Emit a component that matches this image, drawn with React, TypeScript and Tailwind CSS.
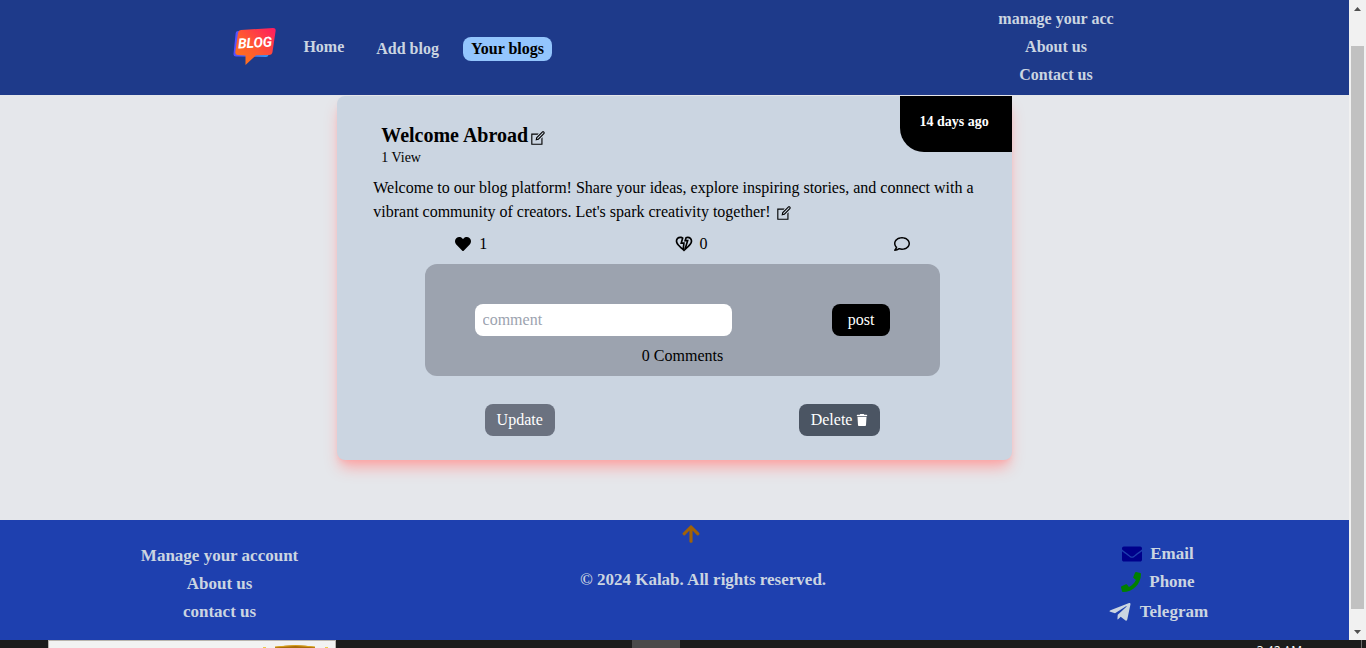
import {
  FaArrowUp,
  FaEnvelope,
  FaHeart,
  FaPhone,
  FaRegComment,
  FaTelegramPlane,
} from "react-icons/fa";
import { FaTrash } from "react-icons/fa6";
import { LiaEditSolid } from "react-icons/lia";
import { MdOutlineHeartBroken } from "react-icons/md";

function Logo() {
  return (
    <svg viewBox="0 0 44 40" className="h-10 w-11 shrink-0" role="img" aria-label="Blog">
      <defs>
        <linearGradient id="bubble" x1="0" y1="1" x2="1" y2="0">
          <stop offset="0" stopColor="#ff7a14" />
          <stop offset="0.45" stopColor="#ff5a30" />
          <stop offset="1" stopColor="#ff1a62" />
        </linearGradient>
        <linearGradient id="bubbleShade" x1="0" y1="0" x2="1" y2="0">
          <stop offset="0" stopColor="#5a4cff" />
          <stop offset="1" stopColor="#2a9df4" />
        </linearGradient>
      </defs>
      <path d="M5 4 Q3 4 2.700 6 L0.500 27 Q0.300 29.500 3 29.500 L33 30 Q35 30 35.500 28 L38 7 Z" fill="url(#bubbleShade)" />
      <path d="M8 3 L40 1 Q43 1 42.600 4 L39.500 25 Q39 28 36 28 L23 28.300 L12.500 38 L12.500 28.500 L4.500 28 Q2 28 2.300 25 L5 6 Q5.500 3.200 8 3 Z" fill="url(#bubble)" />
      <text
        x="22"
        y="20.500"
        textAnchor="middle"
        fontSize="14"
        fontWeight="700"
        fontStyle="italic"
        fill="#fff"
        fontFamily="Roboto, sans-serif"
        transform="rotate(-3 22 16)"
      >
        BLOG
      </text>
    </svg>
  );
}

function Header() {
  return (
    <header className="flex h-[95px] shrink-0 items-center justify-between bg-[#1e3a8a] pr-[17.45%] pb-0.5 pl-[17.3%] font-bold text-[#cbd5e1]">
      <nav className="flex items-center gap-4">
        <div className="flex items-center gap-[18px]">
          <Logo />
          <a href="#home" className="px-2">Home</a>
        </div>
        <div className="flex items-center gap-4 pt-1">
          <a href="#add" className="px-2">Add blog</a>
          <a href="#yours" className="rounded-lg bg-[#93c5fd] px-2 text-black">Your blogs</a>
        </div>
      </nav>
      <nav className="flex flex-col items-center gap-1">
        <a href="#account">manage your acc</a>
        <a href="#about">About us</a>
        <a href="#contact">Contact us</a>
      </nav>
    </header>
  );
}

function BlogCard() {
  return (
    <article className="relative mx-auto mt-px w-1/2 rounded-lg bg-[#cbd5e1] pt-[27px] pr-5 pb-6 pl-9 text-black shadow-[0_10px_15px_-3px_#fca5a5,0_4px_6px_-4px_#fca5a5]">
      <div className="absolute top-0 right-0 rounded-bl-3xl bg-black pt-3.5 pr-[23px] pb-[18px] pl-5 text-sm leading-6 font-bold text-white">
        14 days ago
      </div>
      <div className="px-2">
        <h1 className="flex items-center gap-px text-xl leading-[25px] font-bold">
          Welcome Abroad
          <button type="button" aria-label="Edit title" className="pt-1">
            <LiaEditSolid className="size-[18px]" />
          </button>
        </h1>
        <p className="text-sm">1 View</p>
      </div>
      <p className="mt-2">
        Welcome to our blog platform! Share your ideas, explore inspiring stories, and connect with a
        vibrant community of creators. Let's spark creativity together!{" "}
        <button type="button" aria-label="Edit text" className="align-middle">
          <LiaEditSolid className="size-[18px]" />
        </button>
      </p>
      <div className="mt-2 flex justify-between px-[13.25%]">
        <button type="button" aria-label="Like" className="flex items-center gap-2">
          <FaHeart className="size-4" />1
        </button>
        <button type="button" aria-label="Dislike" className="flex items-center gap-1.5">
          <MdOutlineHeartBroken className="size-5" />0
        </button>
        <button type="button" aria-label="Comments" className="flex items-center">
          <FaRegComment className="size-4" />
        </button>
      </div>
      <section className="mx-auto mt-2 w-5/6 rounded-xl bg-[#9ca3af] pt-10 pb-2">
        <form className="flex justify-around">
          <input
            type="text"
            placeholder="comment"
            aria-label="comment"
            className="h-8 w-1/2 rounded-lg bg-white px-2 placeholder:text-[#9ca3af]"
          />
          <button type="button" className="h-8 rounded-lg bg-black px-4 text-white">post</button>
        </form>
        <p className="mt-2 text-center">0 Comments</p>
      </section>
      <div className="mt-7 flex justify-between px-[18%] text-white">
        <button type="button" className="h-8 rounded-lg bg-[#6b7280] px-3">Update</button>
        <button type="button" className="flex h-8 items-center gap-1 rounded-lg bg-[#4b5563] px-3">
          Delete <FaTrash className="size-3" />
        </button>
      </div>
    </article>
  );
}

function Footer() {
  return (
    <footer className="flex h-[120px] shrink-0 justify-around bg-[#1e40af] text-[17px] leading-6 font-bold text-[#cbd5e1]">
      <nav className="flex flex-col items-center gap-1 pt-6">
        <a href="#account">Manage your account</a>
        <a href="#about">About us</a>
        <a href="#contact">contact us</a>
      </nav>
      <div className="flex flex-col items-center gap-6 pt-1">
        <a href="#top" aria-label="Back to top" className="pr-6 text-[#a16207]">
          <FaArrowUp className="size-5" />
        </a>
        <p>© 2024 Kalab. All rights reserved.</p>
      </div>
      <nav className="flex flex-col items-center gap-1 pt-[22px]">
        <a href="#email" className="flex items-center gap-2">
          <FaEnvelope className="size-5 text-[#00008b]" />
          Email
        </a>
        <a href="#phone" className="flex items-center gap-2">
          <FaPhone className="size-5 text-[#008000]" />
          Phone
        </a>
        <a href="#telegram" className="flex items-center gap-2 leading-7">
          <FaTelegramPlane className="size-6" />
          Telegram
        </a>
      </nav>
    </footer>
  );
}

function ScrollTrack() {
  return (
    <div className="flex w-[17px] shrink-0 flex-col items-center bg-[#f1f1f1]" aria-hidden="true">
      <div className="flex h-[17px] items-center">
        <svg viewBox="0 0 7 4" className="h-1 w-[7px]"><path d="M3.500 0 7 4H0z" fill="#505050" /></svg>
      </div>
      <div className="flex w-full flex-1 flex-col items-center pt-[29px] pb-3.5">
        <div className="w-[13px] flex-1 bg-[#c1c1c1]" />
      </div>
      <div className="flex h-[17px] items-center">
        <svg viewBox="0 0 7 4" className="h-1 w-[7px]"><path d="M0 0H7L3.500 4z" fill="#505050" /></svg>
      </div>
    </div>
  );
}

function Taskbar() {
  return (
    <div className="flex h-2 shrink-0 overflow-hidden bg-[#1c1c1c]">
      <div className="ml-12 flex w-72 justify-end border border-b-0 border-[#b8b4ae] bg-[#f2f2f2] pr-1.5">
        <svg viewBox="0 0 66 7" className="h-[7px] w-[66px]">
          <path d="M12 7V6Q33 2.500 52 6V7Z" fill="#a86a0a" />
          <path d="M12 6Q33 3 52 6" fill="none" stroke="#d9a21c" strokeWidth="1" />
          <path d="M0 6h3v1H0zM62 6h3v1h-3z" fill="#ecc94b" />
        </svg>
      </div>
      <div className="ml-[296px] w-12 bg-[#4a4a4a]" />
      <div className="mr-1 ml-auto flex border-r border-[#6b6b6b] pr-[59px] text-white">
        <span className="pt-[3px] font-['Open_Sans',sans-serif] text-xs leading-4">3:42 AM</span>
      </div>
    </div>
  );
}

export default function App() {
  return (
    <div className="flex h-screen flex-col font-['Liberation_Serif',serif] text-base">
      <div className="flex min-h-0 flex-1">
        <div className="flex min-w-0 flex-1 flex-col overflow-hidden bg-[#e5e7eb]">
          <Header />
          <main className="min-h-0 flex-1">
            <BlogCard />
          </main>
          <Footer />
        </div>
        <ScrollTrack />
      </div>
      <Taskbar />
    </div>
  );
}
